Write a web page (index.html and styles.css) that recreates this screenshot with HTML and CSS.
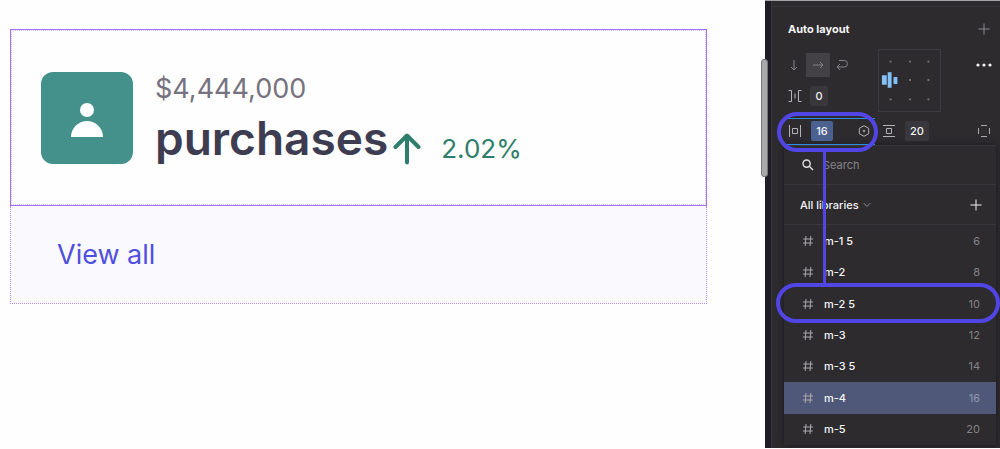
FILE: index.html
```html
<!DOCTYPE html>
<html lang="en">
<head>
<meta charset="utf-8">
<meta name="viewport" content="width=device-width, initial-scale=1">
<title>Auto layout spacing</title>
<link rel="stylesheet" href="styles.css">
</head>
<body>
<svg class="defs" aria-hidden="true">
  <symbol id="hash" viewBox="0 0 12 12"><path d="M4 1L3.2 11M8.8 1L8 11M1.2 4H11M1 8H10.8"/></symbol>
</svg>
<div class="page">
  <main class="canvas">
    <article class="card">
      <div class="summary">
        <div class="avatar">
          <svg viewBox="0 0 32 36" width="32" height="36"><circle cx="16" cy="8" r="7"/><path d="M0 35a16 16 0 0 1 32 0z"/></svg>
        </div>
        <div class="stat">
          <p class="amount">$4,444,000</p>
          <div class="line">
            <h1 class="title">purchases</h1>
            <p class="change">
              <svg viewBox="0 0 28 32" width="28" height="32"><path d="M14 29.500V3M2.500 14L14 2.500 25.500 14"/></svg>
              <span>2.02%</span>
            </p>
          </div>
        </div>
      </div>
      <footer class="footer"><a class="view" href="#">View all</a></footer>
    </article>
  </main>

  <aside class="panel">
    <div class="scrollbar"></div>
    <header class="head">
      <h2 class="heading">Auto layout</h2>
      <button class="icon" aria-label="Add auto layout"><svg class="dim" viewBox="0 0 12 12" width="12" height="12"><path d="M6 .5v11M.5 6h11"/></svg></button>
    </header>
    <div class="controls">
      <div class="left">
        <div class="directions">
          <button class="direction" aria-label="Vertical"><svg viewBox="0 0 12 12" width="12" height="12"><path d="M6 1v10M3 8l3 3 3-3"/></svg></button>
          <button class="direction active" aria-label="Horizontal"><svg viewBox="0 0 12 12" width="12" height="12"><path d="M1 6h10M8 3l3 3-3 3"/></svg></button>
          <button class="direction" aria-label="Wrap"><svg viewBox="0 0 12 12" width="12" height="12"><path d="M3 1.500h5.200a2.900 2.900 0 0 1 0 6.500H1M4 5L1 8l3 3"/></svg></button>
        </div>
        <label class="field">
          <svg viewBox="0 0 14 12" width="14" height="12"><path d="M.5 .5h3v11h-3M13.500 .5h-3v11h3M7 3.500v5"/></svg>
          <input class="number" value="0" aria-label="Gap">
        </label>
      </div>
      <svg class="align" viewBox="0 0 63 63" width="63" height="63" role="img" aria-label="Align left">
        <g class="dots"><path d="M11 11h2v2h-2zM31 11h2v2h-2zM50 11h2v2h-2zM31 30h2v2h-2zM50 30h2v2h-2zM11 50h2v2h-2zM31 50h2v2h-2zM50 50h2v2h-2z"/></g>
        <path class="bars" d="M3 26h5v10H3zM9 23h4v16H9zM15 28h4v7h-4z"/>
      </svg>
      <button class="icon more" aria-label="More options"><svg viewBox="0 0 16 4" width="16" height="4"><circle cx="2" cy="2" r="1.600"/><circle cx="8" cy="2" r="1.600"/><circle cx="14" cy="2" r="1.600"/></svg></button>
    </div>
    <div class="padding">
      <label class="field focused">
        <svg viewBox="0 0 12 12" width="12" height="12"><path d="M.5 0v12M11.500 0v12M3.500 3.500h5v5h-5z"/></svg>
        <input class="number selected" value="16" aria-label="Horizontal padding">
        <svg class="variable" viewBox="0 0 12 12" width="12" height="12"><path d="M6 .7l4.700 2.600v5.400L6 11.300 1.300 8.700V3.300z"/><circle cx="6" cy="6" r=".8"/></svg>
      </label>
      <label class="field">
        <svg viewBox="0 0 12 12" width="12" height="12"><path d="M0 .5h12M0 11.500h12M3.500 3.500h5v5h-5z"/></svg>
        <input class="number" value="20" aria-label="Vertical padding">
      </label>
      <button class="icon" aria-label="Individual padding"><svg class="soft" viewBox="0 0 12 12" width="12" height="12"><path d="M3 .5h6M3 11.500h6M.5 3v6M11.500 3v6"/></svg></button>
    </div>

    <section class="dropdown">
      <label class="search">
        <svg viewBox="0 0 12 12" width="12" height="12"><circle cx="4.600" cy="4.600" r="3.600"/><path d="M7.300 7.300L11 11"/></svg>
        <input class="query" type="search" placeholder="Search">
      </label>
      <div class="libraries">
        <button class="library">All libraries <svg viewBox="0 0 8 6" width="8" height="6"><path d="M.7 1L4 4.500 7.300 1"/></svg></button>
        <button class="icon" aria-label="Create variable"><svg viewBox="0 0 12 12" width="12" height="12"><path d="M6 .5v11M.5 6h11"/></svg></button>
      </div>
      <div class="list">
        <button class="item"><svg class="hash"><use href="#hash"/></svg><span>m-1 5</span><span class="value">6</span></button>
        <button class="item"><svg class="hash"><use href="#hash"/></svg><span>m-2</span><span class="value">8</span></button>
        <button class="item"><svg class="hash"><use href="#hash"/></svg><span>m-2 5</span><span class="value">10</span></button>
        <button class="item"><svg class="hash"><use href="#hash"/></svg><span>m-3</span><span class="value">12</span></button>
        <button class="item"><svg class="hash"><use href="#hash"/></svg><span>m-3 5</span><span class="value">14</span></button>
        <button class="item current"><svg class="hash"><use href="#hash"/></svg><span>m-4</span><span class="value">16</span></button>
        <button class="item"><svg class="hash"><use href="#hash"/></svg><span>m-5</span><span class="value">20</span></button>
      </div>
    </section>
    <div class="callout source"></div>
    <div class="connector"></div>
    <div class="callout target"></div>
  </aside>
</div>
</body>
</html>
```
FILE: styles.css
```css
* { box-sizing: border-box; }
body { margin: 0; background: #fefefe; font-family: Inter, "Liberation Sans", sans-serif; }
h1, h2, p { margin: 0; }
svg { display: block; flex: none; fill: none; stroke: currentColor; }
button, input { font: inherit; color: inherit; background: none; border: 0; padding: 0; margin: 0; }
button { cursor: pointer; }
.defs { position: absolute; width: 0; height: 0; }

.page { display: flex; align-items: flex-start; }
.canvas { flex: 1; padding: 29px 58px 0 10px; }

.summary { display: flex; align-items: center; gap: 22px; padding: 35px 30px 34px; border: 1px solid #a56ef5; outline: 1px dotted #d9c4fb; outline-offset: -2px; background: #fefefe; }
.avatar { display: grid; place-items: center; width: 92px; height: 92px; border-radius: 12px; background: #43918a; }
.avatar svg { fill: #fff; stroke: none; margin-top: 4px; }
.stat { padding-top: 8px; }
.amount { color: #77727f; font-size: 27px; line-height: 32px; }
.line { display: flex; align-items: flex-end; gap: 5px; }
.title { color: #3d3c50; font-size: 46px; font-weight: 600; line-height: 66px; }
.change { display: flex; align-items: center; gap: 20px; padding-bottom: 6px; color: #2f7d6b; font-size: 26px; line-height: 32px; }
.change svg { stroke-width: 4; stroke-linecap: round; stroke-linejoin: round; }
.footer { padding: 32px 46px; border: 1px dotted #b58cf6; border-top: 0; background: #faf9fe; }
.view { color: #4f4fe0; font-size: 27px; line-height: 33px; text-decoration: none; }

.panel { position: relative; width: 235px; padding: 0 0 3px 7px; border-top: 1px solid #a3a2a4; background: linear-gradient(90deg, #1e1c26 6px, #39373c 6px, #39373c 7px, #2d2b2e 7px); color: #f4f4f5; font-size: 11px; line-height: 16px; }
.scrollbar { position: absolute; left: -4px; top: 58px; width: 7px; height: 118px; border: 1px solid #77757c; border-radius: 3px; background: #a9a8ad; }
.icon { display: grid; place-items: center; width: 16px; height: 16px; }
.dim { color: #8d8b90; }
.soft { color: #aaa8ac; }
.head { display: flex; align-items: center; justify-content: space-between; margin-top: 5px; padding: 14px 8px 12px 16px; border-top: 1px solid #3a383c; }
.heading { font-size: 11px; line-height: 16px; font-weight: 700; }
.controls { display: flex; align-items: flex-start; padding: 0 8px 0 10px; }
.left { flex: 1; padding-top: 4px; }
.directions { display: flex; }
.direction { display: grid; place-items: center; width: 24px; height: 24px; color: #858388; }
.direction.active { background: #434145; }
.field { display: flex; align-items: center; gap: 8px; color: #b4b2b6; }
.left .field { margin-top: 9px; padding-left: 6px; }
.number { width: 18px; height: 20px; border-radius: 2px; background: #39373b; color: #f4f4f5; text-align: center; font-weight: 500; }
.align { border: 1px solid #3d3b3f; margin-right: 35px; }
.dots { fill: #77757a; stroke: none; }
.bars { fill: #83c1f8; stroke: none; }
.more { margin-top: 8px; }
.more svg { fill: #f4f4f5; stroke: none; }
.padding { display: flex; align-items: center; height: 28px; margin-top: 5px; padding: 0 8px 0 11px; }
.padding .field { gap: 10px; }
.padding .number { width: 24px; }
.focused { width: 92px; height: 27px; padding: 0 5px 0 6px; border: solid #2c8de0; border-width: 1px 0; }
.padding .focused { gap: 10px; margin-right: 8px; }
.padding .selected { width: 22px; background: #4b6290; }
.variable { margin-left: auto; }
.padding .icon { margin-left: auto; }

.dropdown { margin: 0 4px 0 12px; border-top: 1px solid #39373b; background: #2d2b2e; box-shadow: 0 0 6px #19181c; }
.search, .libraries { display: flex; align-items: center; height: 40px; border-bottom: 1px solid #39373b; }
.search { height: 39px; gap: 9px; padding: 0 18px; color: #e2e1e3; }
.search svg { stroke-width: 1.400; }
.query { flex: 1; min-width: 0; appearance: none; outline: 0; }
.query::placeholder { color: #858388; opacity: 1; }
.libraries { justify-content: space-between; padding: 0 12px 0 16px; }
.library { display: flex; align-items: center; gap: 4px; font-weight: 500; }
.library svg { color: #8d8b90; }
.list { display: grid; grid-auto-rows: 1fr; height: 220px; }
.item { display: flex; align-items: center; gap: 10px; padding: 0 16px 0 18px; font-weight: 500; }
.hash { width: 12px; height: 12px; color: #a9a7ab; }
.value { margin-left: auto; color: #858388; font-weight: 400; }
.current { background: #4f5878; }
.current .value { color: #9199b2; }

.callout { position: absolute; border: 4px solid #5145e5; border-radius: 20px; pointer-events: none; }
.source { left: 12px; top: 111px; width: 101px; height: 40px; }
.target { left: 11px; right: 0; top: 282px; height: 40px; }
.connector { position: absolute; left: 58px; top: 149px; width: 3px; height: 135px; background: #5145e5; }
```
